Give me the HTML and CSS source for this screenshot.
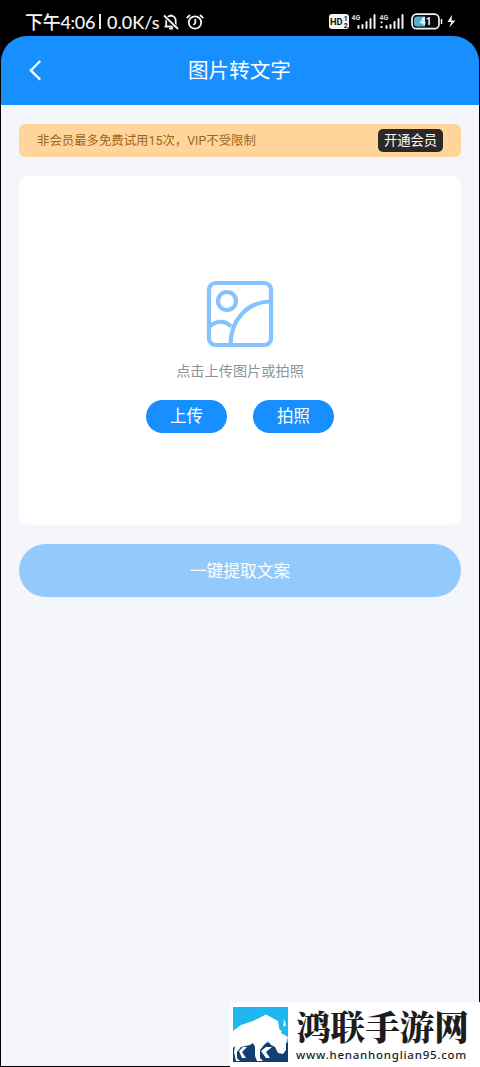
FILE: index.html
```html
<!DOCTYPE html>
<html lang="zh-CN">
<head>
<meta charset="utf-8">
<title>图片转文字</title>
<link rel="stylesheet" href="styles.css">
</head>
<body>
<div class="phone">
  <div class="status">
    <span class="clock">下午4:06</span><span class="bar"></span><span class="speed">0.0K/s</span>
    <svg class="bell" width="16" height="16" viewBox="0 0 16 16" fill="none" stroke="#f4f4f8" stroke-width="1.8"><path d="M1.500 12.500h13M3.200 12V6.500a4.700 4.700 0 0 1 9.500 0V12M6 14.700h4M8 .5v1.500"/><path d="M1 1.500l14 13.500" stroke="#000" stroke-width="3.600"/><path d="M1 1.500l14 13.500"/></svg>
    <svg class="alarm" width="18" height="16" viewBox="0 0 18 16" fill="none" stroke="#f4f4f8" stroke-width="1.800"><circle cx="9" cy="8.500" r="6.200"/><path d="M9.300 5v4L7.500 11M.7 4.200L4 1M17.300 4.200L14 1"/></svg>
    <svg class="signals" width="130" height="18" viewBox="0 0 130 18">
      <rect x="1" y="1" width="20" height="15" rx="3" fill="#f4f4f8"/>
      <g class="sig-text"><text x="2" y="12" font-size="9.300" fill="#111">HD</text><text x="15.800" y="8" font-size="7" fill="#111">1</text><text x="15.800" y="15" font-size="7" fill="#111">2</text>
      <text x="23.500" y="6.500" font-size="7" fill="#ddd">4G</text><text x="51.500" y="6.500" font-size="7" fill="#ddd">4G</text></g>
      <path d="M30.500 15v-2M34.500 15v-3M38.500 15V9M42.500 15V6M46.500 15V2M58.500 15v-2M62.500 15v-3M66.500 15V9M70.500 15V6M74.500 15V2" stroke="#f4f4f8" stroke-width="2" stroke-linecap="round"/>
      <path d="M53.500 8.500v1.800M53.500 13v2" stroke="#f4f4f8" stroke-width="2"/>
      <rect x="84" y="1.200" width="27" height="14.500" rx="4.500" fill="#0a0a0a" stroke="#f4f4f8" stroke-width="1.700"/>
      <path d="M89 3.500h8v10h-8a3 3 0 0 1-3-3v-4a3 3 0 0 1 3-3z" fill="#55aed0"/>
      <text class="sig-text" x="92" y="12.300" font-size="10" fill="#fff">41</text>
      <path d="M113.500 6v5" stroke="#f4f4f8" stroke-width="1.500"/>
      <path d="M124 1.800L119.500 9h3.700l-2 5.500L127.500 7.500h-4z" fill="#f4f4f8"/>
    </svg>
  </div>
  <header class="header">
    <svg class="back" width="13" height="21" viewBox="0 0 13 21" fill="none" stroke="#fff" stroke-width="2.300"><path d="M12.200 1L2.800 10.400l9.400 9.200"/></svg>
    <h1 class="title">图片转文字</h1>
  </header>
  <main class="content">
    <div class="notice"><span class="notice-text">非会员最多免费试用15次，VIP不受限制</span><button class="vip">开通会员</button></div>
    <section class="upload">
      <svg class="picture" width="68" height="68" viewBox="0 0 68 68" fill="none" stroke="#86c2fb" stroke-width="4.200"><rect x="3" y="3" width="62" height="62" rx="6.500"/><circle cx="21" cy="21" r="9"/><path d="M64 21.500C41 22 24.500 40 24.500 65M4 46c7-5.500 15-5.500 21 .5"/></svg>
      <p class="tip">点击上传图片或拍照</p>
      <div class="actions"><button class="action">上传</button><button class="action">拍照</button></div>
    </section>
    <button class="extract">一键提取文案</button>
  </main>
</div>
<aside class="watermark">
  <svg class="bison" width="55" height="55" viewBox="0 0 55 55">
    <path fill="#20b7ef" d="M0 0h55v36H0z"/><path fill="#143e70" d="M0 36h55v19H0z"/>
    <path fill="#fff" d="M0 24L8 18 20 14 33 7.500 45 14 46 20 50 22 48 26 55 30 53 36 53 43 50 47 45 46 42 40 38 38 35 34 31 38 27 43 27 51 30 54 24 54 22 49 22 40 20 36 17 38 8 40 4 45 4 51 7 54 0 54z"/>
    <path fill="#143e70" d="M0 41L2 39 1 45 3 54H0z"/>
    <path fill="#fff" d="M6 44L10 40H14L9 45 13 51H9zM28 44L33 40H39L33 45 37 51H33z"/>
    <path fill="#20b7ef" d="M48 12L51 15 49 19 52 22 50 25 46 22 47 18 49 16z"/>
    <path fill="#fff" d="M50 12Q54 16 52 20L50 18 51 15z"/>
  </svg>
  <div class="brand"><div class="brand-name">鸿联手游网</div><div class="brand-url">www.henanhonglian95.com</div></div>
</aside>
</body>
</html>
```
FILE: styles.css
```css
* { box-sizing: border-box; }
body { margin: 0; background: #000; font-family: Roboto, "Noto Sans CJK SC", sans-serif; }
button { border: 0; padding: 0; font-family: inherit; color: #fff; }
.phone { display: flex; flex-direction: column; height: 1067px; padding: 0 1px 1px; background: linear-gradient(#000 60px, #f4f6fb 60px) content-box; }
.status { display: flex; align-items: center; height: 36px; padding: 7px 21px 0 24px; background: #000; color: #f4f4f8; font: 500 18px/28px Lato, "Noto Sans CJK SC", sans-serif; white-space: nowrap; }
.clock { width: 69px; letter-spacing: -.3px; }
.bar { width: 2px; height: 15px; margin-left: 5px; background: #e8e8ec; }
.speed { width: 54px; margin-left: 6px; }
.bell { margin-left: 2px; }
.alarm { margin-left: 7px; }
.signals { margin-left: auto; }
.sig-text { font-family: Roboto, sans-serif; font-weight: 700; }
.header { display: flex; align-items: center; height: 69px; padding-left: 27px; background: #178fff; border-radius: 26px 26px 0 0; color: #fff; }
.title { margin: 0 0 0 147px; font-size: 20.6px; line-height: 30px; font-weight: 400; }
.content { padding: 19px 18px 0 18px; }
.notice { display: flex; align-items: center; justify-content: space-between; height: 33px; padding: 0 18px 0 19px; border-radius: 6px; background: #ffd59a; color: #9a6720; }
.notice-text { margin-left: -1px; font-size: 12.4px; line-height: 18px; padding-top: 1px; }
.vip { width: 65px; height: 23px; border-radius: 5px; background: #2b2928; font-size: 13.3px; line-height: 23px; }
.upload { display: flex; flex-direction: column; align-items: center; height: 349px; margin-top: 19px; padding-top: 104px; border-radius: 10px; background: #fff; }
.tip { margin: 11px 0 0; color: #8c9399; font-size: 14.2px; line-height: 24px; }
.actions { display: flex; gap: 26px; margin-top: 17px; }
.action { width: 81px; height: 33px; border-radius: 17px; background: #178fff; font-size: 16.5px; line-height: 33px; }
.extract { display: block; width: 100%; height: 53px; margin-top: 19px; padding-top: 1px; border-radius: 27px; background: #94c9fb; font-size: 16.8px; line-height: 53px; }
.watermark { position: absolute; left: 230px; top: 1002px; display: flex; width: 250px; height: 65px; padding: 5px 0 0 3px; background: #fff; color: #1d1d1f; }
.brand { margin-left: 8px; }
.brand-name { height: 41px; font-family: "Noto Serif CJK SC", "Noto Sans CJK SC", serif; font-size: 34.600px; line-height: 37px; font-weight: 900; white-space: nowrap; }
.brand-url { font: 500 11.5px/14px "Noto Sans", sans-serif; letter-spacing: .75px; }
```
